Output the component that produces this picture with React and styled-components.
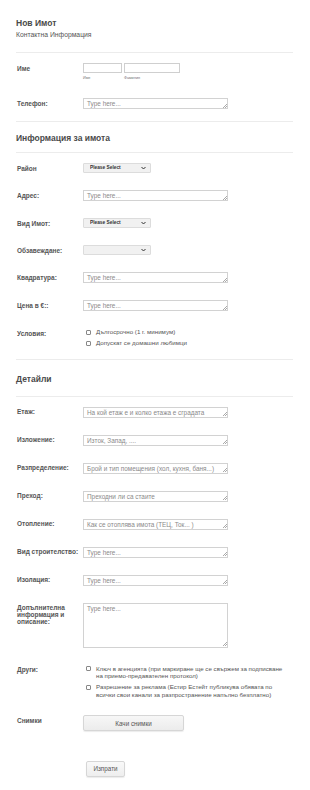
import React from 'react';
import styled, { createGlobalStyle } from 'styled-components';

const GlobalStyle = createGlobalStyle`
  html, body {
    margin: 0;
    padding: 0;
    background: #fff;
  }
  body {
    font-family: "Liberation Sans", Arial, sans-serif;
    color: #555;
  }
  textarea::placeholder {
    color: #8a8a8a;
    opacity: 1;
  }
`;

const details = [
  { label: 'Етаж:', placeholder: 'На кой етаж е и колко етажа е сградата' },
  { label: 'Изложение:', placeholder: 'Изток, Запад, ....' },
  { label: 'Разпределение:', placeholder: 'Брой и тип помещения (хол, кухня, баня...)' },
  { label: 'Преход:', placeholder: 'Преходни ли са стаите' },
  { label: 'Отопление:', placeholder: 'Как се отоплява имота (ТЕЦ, Ток... )' },
  { label: 'Вид строителство:', placeholder: 'Type here...' },
  { label: 'Изолация:', placeholder: 'Type here...' },
];

const Chevron = () => (
  <svg width="5" height="4" viewBox="0 0 10 7">
    <path d="M1 1.5 L5 5.5 L9 1.5" fill="none" stroke="#333" strokeWidth="2" />
  </svg>
);

const Select = ({ value }) => (
  <SelectWrap>
    <SelectBox defaultValue="">
      <option value="">{value}</option>
    </SelectBox>
    <Arrow><Chevron /></Arrow>
  </SelectWrap>
);

// textarea with the small corner grip drawn on top
const Area = ({ placeholder, h }) => (
  <AreaWrap>
    <AreaBox placeholder={placeholder} $h={h} />
    <Grip />
  </AreaWrap>
);

const Check = ({ children }) => (
  <CheckItem>
    <Box />
    <span>{children}</span>
  </CheckItem>
);

const App = () => {
  return (
    <Page>
      <GlobalStyle />
      <Title>Нов Имот</Title>
      <Subtitle>Контактна Информация</Subtitle>
      <Divider />

      <Fields>
        <Row>
          <Label>Име</Label>
          <NameGroup>
            <NamePart>
              <Input $w={39} />
              <SubLabel>Име</SubLabel>
            </NamePart>
            <NamePart>
              <Input $w={56} />
              <SubLabel>Фамилия</SubLabel>
            </NamePart>
          </NameGroup>
        </Row>
        <Row>
          <Label>Телефон:</Label>
          <Area placeholder="Type here..." />
        </Row>
      </Fields>
      <Divider />

      <SectionTitle $top={11} $bottom={9}>Информация за имота</SectionTitle>
      <Divider />

      <Fields>
        <Row>
          <Label>Район</Label>
          <Select value="Please Select" />
        </Row>
        <Row>
          <Label>Адрес:</Label>
          <Area placeholder="Type here..." />
        </Row>
        <Row>
          <Label>Вид Имот:</Label>
          <Select value="Please Select" />
        </Row>
        <Row>
          <Label>Обзавеждане:</Label>
          <Select value="" />
        </Row>
        <Row>
          <Label>Квадратура:</Label>
          <Area placeholder="Type here..." />
        </Row>
        <Row>
          <Label>Цена в €::</Label>
          <Area placeholder="Type here..." />
        </Row>
        <Row>
          <Label>Условия:</Label>
          <Options>
            <Check>Дългосрочно (1 г. минимум)</Check>
            <Check>Допускат се домашни любимци</Check>
          </Options>
        </Row>
      </Fields>
      <Divider />

      <SectionTitle $top={14} $bottom={12}>Детайли</SectionTitle>
      <Divider />

      <Fields>
        {details.map((d) => (
          <Row key={d.label}>
            <Label>{d.label}</Label>
            <Area placeholder={d.placeholder} />
          </Row>
        ))}
        <Row>
          <Label>Допълнителна информация и описание:</Label>
          <Area placeholder="Type here..." h={45} />
        </Row>
        <Row>
          <Label>Други:</Label>
          <Options>
            <Check>Ключ в агенцията (при маркиране ще се свържем за подписване на приемо-предавателен протокол)</Check>
            <Check>Разрешение за реклама (Естир Естейт публикува обявата по всички свои канали за разпространение напълно безплатно)</Check>
          </Options>
        </Row>
        <Row>
          <Label>Снимки</Label>
          <UploadButton type="button">Качи снимки</UploadButton>
        </Row>
        <SubmitRow>
          <SubmitButton type="button">Изпрати</SubmitButton>
        </SubmitRow>
      </Fields>
    </Page>
  );
};

const Page = styled.div`
  width: 277px;
  padding: 18px 17px 30px 16px;
`;

const Title = styled.h1`
  margin: 0;
  font-size: 8.5px;
  line-height: 10px;
  font-weight: bold;
  color: #4a4a4a;
`;

const Subtitle = styled.div`
  margin-top: 3px;
  font-size: 6.8px;
  line-height: 8px;
  color: #555;
`;

const Divider = styled.hr`
  margin: 13px 0 0;
  border: 0;
  height: 1px;
  background: #ececec;
`;

const SectionTitle = styled.h2`
  margin: ${(p) => p.$top}px 0 0;
  font-size: 8.5px;
  line-height: 10px;
  font-weight: bold;
  color: #4a4a4a;

  & + hr {
    margin-top: ${(p) => p.$bottom}px;
  }
`;

const Fields = styled.div`
  padding: 1.5px 0 3.5px;
  & + hr {
    margin-top: 0;
  }
`;

const Row = styled.div`
  display: flex;
  align-items: flex-start;
  padding: 8.5px 0;
`;

const Label = styled.div`
  width: 64px;
  flex: none;
  padding: 1.5px 0 0 1px;
  margin-right: 2px;
  font-size: 6.5px;
  line-height: 7px;
  font-weight: bold;
  color: #555;
`;

const NameGroup = styled.div`
  display: flex;
  gap: 2px;
`;

const NamePart = styled.div`
  display: flex;
  flex-direction: column;
`;

const Input = styled.input`
  box-sizing: border-box;
  display: block;
  width: ${(p) => p.$w}px;
  height: 10px;
  margin: 0;
  padding: 0 2px;
  border: 1px solid #cfcfcf;
  outline: none;
`;

const SubLabel = styled.span`
  margin-top: 3px;
  font-size: 3.8px;
  line-height: 5px;
  color: #777;
`;

const AreaWrap = styled.div`
  position: relative;
  width: 145px;
`;

const AreaBox = styled.textarea`
  box-sizing: border-box;
  display: block;
  width: 100%;
  height: ${(p) => p.$h || 11}px;
  margin: 0;
  padding: 1px 3px;
  border: 1px solid #d2d2d2;
  font-family: "Liberation Sans", Arial, sans-serif;
  font-size: 6.4px;
  line-height: 8px;
  color: #555;
  overflow: hidden;
  resize: none;
  outline: none;
`;

const Grip = styled.span`
  position: absolute;
  right: 1.5px;
  bottom: 1.5px;
  width: 4px;
  height: 4px;
  pointer-events: none;
  background: linear-gradient(
    135deg,
    transparent 0 45%,
    #aaa 45% 55%,
    transparent 55% 72%,
    #aaa 72% 82%,
    transparent 82%
  );
`;

const SelectWrap = styled.div`
  position: relative;
  width: 68px;
  height: 10px;
`;

const SelectBox = styled.select`
  appearance: none;
  box-sizing: border-box;
  display: block;
  width: 100%;
  height: 10px;
  margin: 0;
  padding: 0 0 0 6px;
  border: 1px solid #dcdcdc;
  border-radius: 1px;
  background: #f1f1f1;
  font-family: "Liberation Sans", Arial, sans-serif;
  font-size: 4.8px;
  line-height: 8px;
  font-weight: bold;
  color: #333;
  outline: none;
`;

const Arrow = styled.span`
  position: absolute;
  right: 5px;
  top: 3px;
  display: flex;
  pointer-events: none;
`;

const Options = styled.div`
  display: flex;
  flex-direction: column;
  gap: 3.5px;
  padding-left: 3px;
  width: 204px;
`;

const CheckItem = styled.label`
  display: flex;
  align-items: flex-start;
  gap: 5px;
  font-size: 6.2px;
  line-height: 7.5px;
  color: #555;
`;

const Box = styled.span`
  flex: none;
  box-sizing: border-box;
  width: 5px;
  height: 5px;
  margin-top: 1.5px;
  border: 0.6px solid #888;
  border-radius: 1px;
  background: #fff;
`;

const UploadButton = styled.button`
  box-sizing: border-box;
  width: 101px;
  height: 16px;
  margin: 0;
  padding: 0;
  border: 1px solid #d6d6d6;
  border-radius: 2px;
  background: linear-gradient(#f7f7f7, #ececec);
  box-shadow: 0 1px 1px rgba(0, 0, 0, 0.08);
  font-family: "Liberation Sans", Arial, sans-serif;
  font-size: 6.3px;
  color: #555;
`;

const SubmitRow = styled.div`
  padding: 17.5px 0 0 70px;
`;

const SubmitButton = styled.button`
  box-sizing: border-box;
  width: 39px;
  height: 16px;
  margin: 0;
  padding: 0;
  border: 1px solid #d6d6d6;
  border-radius: 2px;
  background: linear-gradient(#f9f9f9, #eeeeee);
  box-shadow: 0 1px 1px rgba(0, 0, 0, 0.08);
  font-family: "Liberation Sans", Arial, sans-serif;
  font-size: 6.3px;
  color: #555;
`;

export default App;
